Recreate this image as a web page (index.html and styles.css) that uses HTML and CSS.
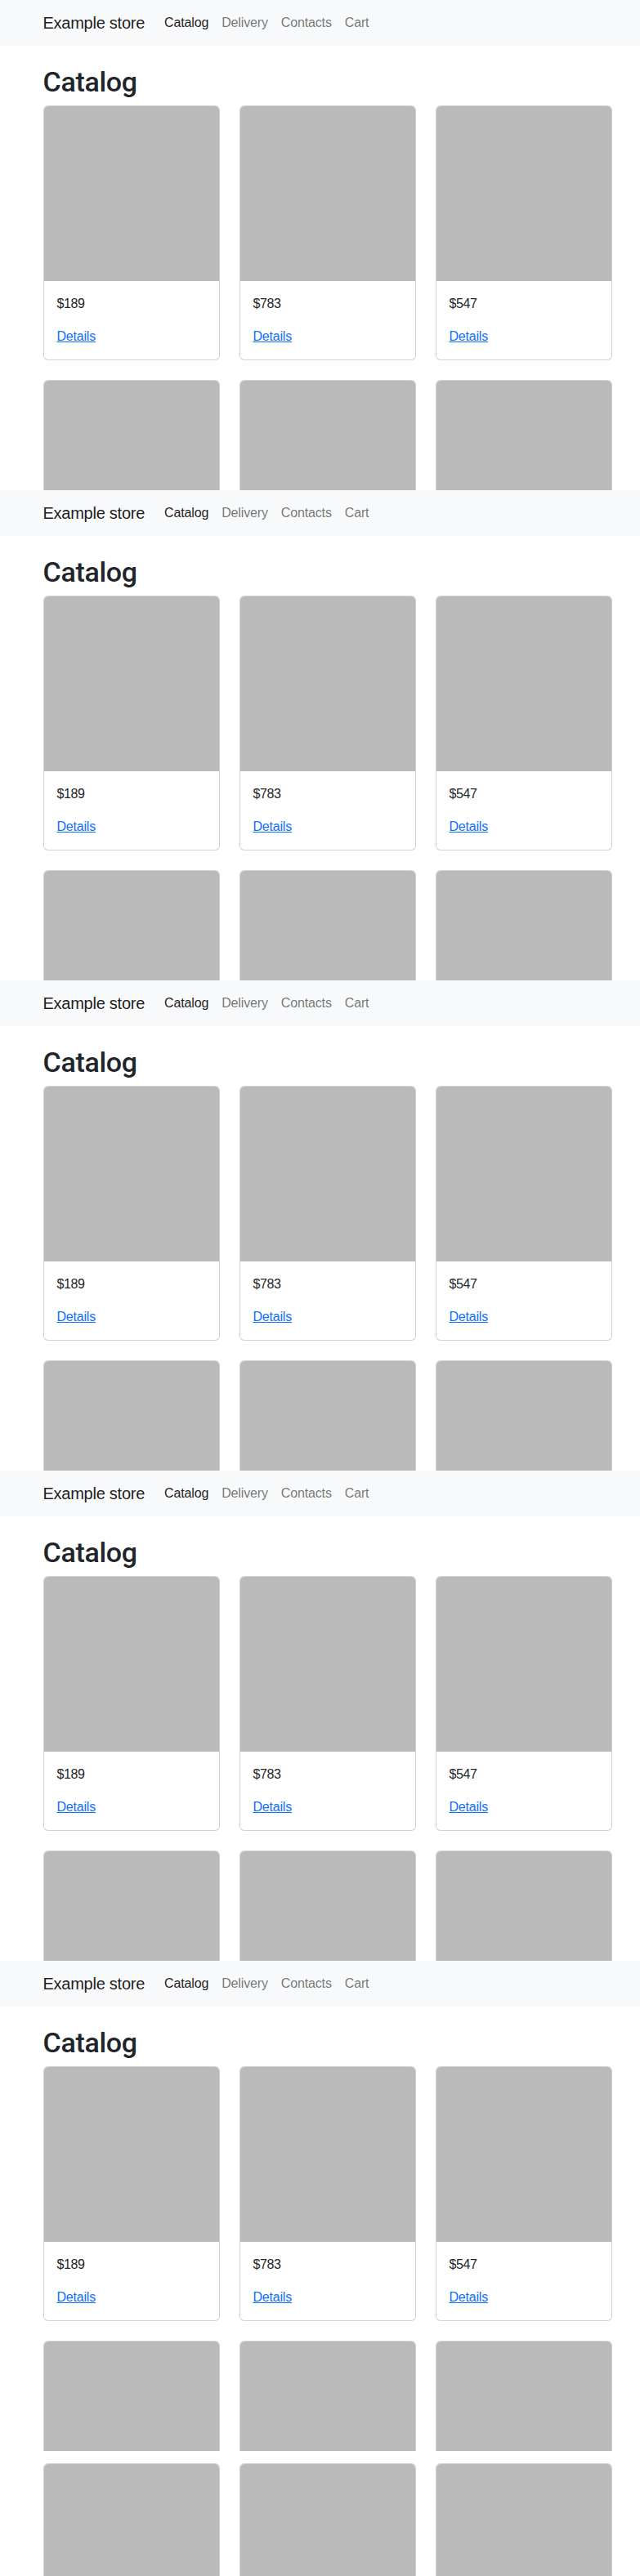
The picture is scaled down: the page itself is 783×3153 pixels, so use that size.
FILE: index.html
```html
<!DOCTYPE html>
<html lang="en">
<head>
<meta charset="utf-8">
<title>Example store</title>
<link rel="stylesheet" href="styles.css">
</head>
<body>
<section class="screen">
  <nav class="navbar"><div class="container nav-inner"><a class="brand" href="#">Example store</a><ul class="nav"><li><a class="nav-link active" href="#">Catalog</a></li><li><a class="nav-link" href="#">Delivery</a></li><li><a class="nav-link" href="#">Contacts</a></li><li><a class="nav-link" href="#">Cart</a></li></ul></div></nav>
  <main class="container page">
    <h1 class="title">Catalog</h1>
    <div class="grid">
      <div class="card"><div class="card-img"></div><div class="card-body"><p class="price">$189</p><a class="details" href="#">Details</a></div></div>
      <div class="card"><div class="card-img"></div><div class="card-body"><p class="price">$783</p><a class="details" href="#">Details</a></div></div>
      <div class="card"><div class="card-img"></div><div class="card-body"><p class="price">$547</p><a class="details" href="#">Details</a></div></div>
      <div class="card"><div class="card-img"></div></div>
      <div class="card"><div class="card-img"></div></div>
      <div class="card"><div class="card-img"></div></div>
    </div>
  </main>
</section>
<section class="screen">
  <nav class="navbar"><div class="container nav-inner"><a class="brand" href="#">Example store</a><ul class="nav"><li><a class="nav-link active" href="#">Catalog</a></li><li><a class="nav-link" href="#">Delivery</a></li><li><a class="nav-link" href="#">Contacts</a></li><li><a class="nav-link" href="#">Cart</a></li></ul></div></nav>
  <main class="container page">
    <h1 class="title">Catalog</h1>
    <div class="grid">
      <div class="card"><div class="card-img"></div><div class="card-body"><p class="price">$189</p><a class="details" href="#">Details</a></div></div>
      <div class="card"><div class="card-img"></div><div class="card-body"><p class="price">$783</p><a class="details" href="#">Details</a></div></div>
      <div class="card"><div class="card-img"></div><div class="card-body"><p class="price">$547</p><a class="details" href="#">Details</a></div></div>
      <div class="card"><div class="card-img"></div></div>
      <div class="card"><div class="card-img"></div></div>
      <div class="card"><div class="card-img"></div></div>
    </div>
  </main>
</section>
<section class="screen">
  <nav class="navbar"><div class="container nav-inner"><a class="brand" href="#">Example store</a><ul class="nav"><li><a class="nav-link active" href="#">Catalog</a></li><li><a class="nav-link" href="#">Delivery</a></li><li><a class="nav-link" href="#">Contacts</a></li><li><a class="nav-link" href="#">Cart</a></li></ul></div></nav>
  <main class="container page">
    <h1 class="title">Catalog</h1>
    <div class="grid">
      <div class="card"><div class="card-img"></div><div class="card-body"><p class="price">$189</p><a class="details" href="#">Details</a></div></div>
      <div class="card"><div class="card-img"></div><div class="card-body"><p class="price">$783</p><a class="details" href="#">Details</a></div></div>
      <div class="card"><div class="card-img"></div><div class="card-body"><p class="price">$547</p><a class="details" href="#">Details</a></div></div>
      <div class="card"><div class="card-img"></div></div>
      <div class="card"><div class="card-img"></div></div>
      <div class="card"><div class="card-img"></div></div>
    </div>
  </main>
</section>
<section class="screen">
  <nav class="navbar"><div class="container nav-inner"><a class="brand" href="#">Example store</a><ul class="nav"><li><a class="nav-link active" href="#">Catalog</a></li><li><a class="nav-link" href="#">Delivery</a></li><li><a class="nav-link" href="#">Contacts</a></li><li><a class="nav-link" href="#">Cart</a></li></ul></div></nav>
  <main class="container page">
    <h1 class="title">Catalog</h1>
    <div class="grid">
      <div class="card"><div class="card-img"></div><div class="card-body"><p class="price">$189</p><a class="details" href="#">Details</a></div></div>
      <div class="card"><div class="card-img"></div><div class="card-body"><p class="price">$783</p><a class="details" href="#">Details</a></div></div>
      <div class="card"><div class="card-img"></div><div class="card-body"><p class="price">$547</p><a class="details" href="#">Details</a></div></div>
      <div class="card"><div class="card-img"></div></div>
      <div class="card"><div class="card-img"></div></div>
      <div class="card"><div class="card-img"></div></div>
    </div>
  </main>
</section>
<section class="screen">
  <nav class="navbar"><div class="container nav-inner"><a class="brand" href="#">Example store</a><ul class="nav"><li><a class="nav-link active" href="#">Catalog</a></li><li><a class="nav-link" href="#">Delivery</a></li><li><a class="nav-link" href="#">Contacts</a></li><li><a class="nav-link" href="#">Cart</a></li></ul></div></nav>
  <main class="container page">
    <h1 class="title">Catalog</h1>
    <div class="grid">
      <div class="card"><div class="card-img"></div><div class="card-body"><p class="price">$189</p><a class="details" href="#">Details</a></div></div>
      <div class="card"><div class="card-img"></div><div class="card-body"><p class="price">$783</p><a class="details" href="#">Details</a></div></div>
      <div class="card"><div class="card-img"></div><div class="card-body"><p class="price">$547</p><a class="details" href="#">Details</a></div></div>
      <div class="card"><div class="card-img"></div></div>
      <div class="card"><div class="card-img"></div></div>
      <div class="card"><div class="card-img"></div></div>
    </div>
  </main>
</section>
<section class="screen-tail">
  <div class="container">
    <div class="grid">
      <div class="card"><div class="card-img"></div></div>
      <div class="card"><div class="card-img"></div></div>
      <div class="card"><div class="card-img"></div></div>
    </div>
  </div>
</section>
</body>
</html>
```
FILE: styles.css
```css
html, body {
  margin: 0;
  padding: 0;
  background: #fff;
}
body {
  font-family: "Liberation Sans", Arial, sans-serif;
  font-size: 16px;
  line-height: 1.5;
  color: #212529;
  overflow-x: hidden;
}
.screen {
  height: 600px;
  overflow: hidden;
}
.screen-tail {
  height: 153px;
  padding-top: 15px;
  box-sizing: border-box;
  overflow: hidden;
}
.container {
  width: 696px;
  margin-left: 52.5px;
}
.navbar {
  background: #f8f9fa;
  height: 56px;
  padding: 8px 0;
  box-sizing: border-box;
}
.nav-inner {
  display: flex;
  align-items: center;
  height: 40px;
}
.brand {
  font-size: 20px;
  line-height: 30px;
  letter-spacing: -0.25px;
  color: rgba(0, 0, 0, 0.9);
  text-decoration: none;
  margin-right: 16px;
  white-space: nowrap;
}
.nav {
  display: flex;
  list-style: none;
  margin: 0;
  padding: 0;
}
.nav-link {
  display: block;
  padding: 8px;
  line-height: 24px;
  letter-spacing: -0.15px;
  color: rgba(0, 0, 0, 0.55);
  text-decoration: none;
}
.nav-link.active {
  color: rgba(0, 0, 0, 0.9);
}
.page {
  padding-top: 24px;
}
.title {
  margin: 0 0 8px;
  font-family: Roboto, "Liberation Sans", sans-serif;
  font-size: 34px;
  font-weight: 500;
  line-height: 1.2;
  letter-spacing: -0.3px;
  color: #212529;
}
.grid {
  display: grid;
  grid-template-columns: repeat(3, 216px);
  gap: 24px;
}
.card {
  border: 1px solid rgba(0, 0, 0, 0.175);
  border-radius: 6px;
  overflow: hidden;
  background: #fff;
}
.card-img {
  height: 214px;
  background: #bababa;
}
.card-body {
  padding: 16px;
}
.price {
  margin: 0 0 16px;
  letter-spacing: -0.4px;
}
.details {
  color: #0d6efd;
  text-decoration: underline;
  letter-spacing: -0.2px;
}
```
